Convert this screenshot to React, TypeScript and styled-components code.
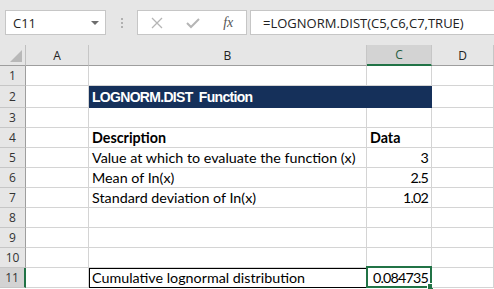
import React from 'react';
import styled, { createGlobalStyle } from 'styled-components';

const GlobalStyle = createGlobalStyle`
  html, body {
    margin: 0;
    padding: 0;
    background: #ffffff;
  }
`;

const Page = styled.div`
  width: 494px;
  height: 289px;
  overflow: hidden;
  background: #ffffff;
  font-family: 'Open Sans', 'Liberation Sans', sans-serif;
`;

const FormulaBar = styled.div`
  display: flex;
  align-items: flex-start;
  height: 45px;
  box-sizing: border-box;
  padding: 10px 0 0 5px;
  background: #e6e6e6;
`;

const NameBox = styled.div`
  display: flex;
  align-items: center;
  justify-content: space-between;
  width: 101px;
  height: 25px;
  box-sizing: border-box;
  padding: 0 6px 0 7px;
  background: #ffffff;
  border: 1px solid #c6c6c6;
  font-size: 13px;
  color: #222222;
`;

const DropArrow = styled.span`
  width: 0;
  height: 0;
  border-left: 4px solid transparent;
  border-right: 4px solid transparent;
  border-top: 4px solid #6d6d6d;
`;

const Grip = styled.div`
  display: flex;
  align-items: center;
  justify-content: center;
  width: 31px;
  height: 25px;
`;

const GripDots = styled.span`
  display: flex;
  flex-direction: column;
  gap: 2px;

  & > i {
    display: block;
    width: 2px;
    height: 2px;
    background: #b0b0b0;
  }
`;

const FormulaButtons = styled.div`
  display: flex;
  align-items: center;
  width: 110px;
  height: 25px;
  box-sizing: border-box;
  padding-left: 1px;
  background: #ffffff;
  border: 1px solid #c6c6c6;
`;

const ButtonSlot = styled.span`
  display: flex;
  align-items: center;
  justify-content: center;
  width: 36px;
  height: 100%;
`;

const Fx = styled.span`
  font-family: 'Liberation Serif', 'DejaVu Serif', serif;
  font-style: italic;
  font-size: 14px;
  color: #555555;
`;

const FormulaInput = styled.div`
  display: flex;
  align-items: center;
  flex: 1;
  height: 25px;
  margin-left: 3px;
  margin-right: -10px;
  box-sizing: border-box;
  padding-left: 12px;
  background: #ffffff;
  border: 1px solid #c6c6c6;
  font-size: 13px;
  color: #222222;
`;

const Sheet = styled.div`
  display: grid;
  grid-template-columns: 26px 63px 278px 65px 1fr;
  grid-template-rows: 21px 20px 22px repeat(9, 20px);
  font-family: 'Lato', 'Liberation Sans', sans-serif;
  font-size: 14.3px;
  color: #000000;
`;

const Corner = styled.div`
  position: relative;
  background: #e6e6e6;
  border-right: 1px solid #bfbfbf;
  border-bottom: 1px solid #9e9e9e;
  box-sizing: border-box;
`;

const ColHead = styled.div<{ $active?: boolean }>`
  display: flex;
  align-items: center;
  justify-content: center;
  box-sizing: border-box;
  background: ${({ $active }) => ($active ? '#d3d3d3' : '#e6e6e6')};
  border-right: 1px solid #c6c6c6;
  border-bottom: ${({ $active }) => ($active ? '2px solid #217346' : '1px solid #9e9e9e')};
  font-family: 'Open Sans', 'Liberation Sans', sans-serif;
  font-size: 12px;
  color: ${({ $active }) => ($active ? '#1f5c3d' : '#222222')};
`;

const RowHead = styled.div<{ $active?: boolean }>`
  display: flex;
  align-items: center;
  justify-content: center;
  box-sizing: border-box;
  background: ${({ $active }) => ($active ? '#d3d3d3' : '#e6e6e6')};
  border-right: ${({ $active }) => ($active ? '2px solid #217346' : '1px solid #9e9e9e')};
  border-bottom: 1px solid #c6c6c6;
  font-family: 'Open Sans', 'Liberation Sans', sans-serif;
  font-size: 12px;
  color: #333333;
`;

const Cell = styled.div<{
  $align?: 'left' | 'right';
  $bold?: boolean;
  $banner?: boolean;
  $boxed?: boolean;
}>`
  position: relative;
  display: flex;
  align-items: center;
  justify-content: ${({ $align }) => ($align === 'right' ? 'flex-end' : 'flex-start')};
  box-sizing: border-box;
  padding: 0 3px;
  white-space: pre;
  border-right: 1px solid ${({ $banner }) => ($banner ? '#15305a' : '#d4d4d4')};
  border-bottom: 1px solid ${({ $banner }) => ($banner ? '#15305a' : '#d4d4d4')};
  background: ${({ $banner }) => ($banner ? '#15305a' : '#ffffff')};
  color: ${({ $banner }) => ($banner ? '#ffffff' : '#000000')};
  font-weight: ${({ $bold }) => ($bold ? 700 : 400)};
  ${({ $align }) => $align === 'right' && `letter-spacing: -0.8px;`}
  ${({ $banner }) =>
    $banner &&
    `font-family: 'Liberation Sans', Arial, sans-serif; font-size: 14px; letter-spacing: -0.7px; padding-top: 1px;`}
  ${({ $boxed }) => $boxed && `outline: 1px solid #000000; outline-offset: -1px;`}
`;

const Selection = styled.div`
  position: absolute;
  left: -1px;
  top: -2px;
  right: -1px;
  bottom: -1px;
  border: 2px solid #217346;
  pointer-events: none;
`;

const FillHandle = styled.div`
  position: absolute;
  right: -4px;
  bottom: -4px;
  width: 5px;
  height: 5px;
  background: #217346;
  border: 1px solid #ffffff;
`;

type RowData = {
  b?: string;
  c?: string;
  bold?: boolean;
  banner?: boolean;
};

const rows: RowData[] = [
  {},
  { b: 'LOGNORM.DIST  Function', banner: true },
  {},
  { b: 'Description', c: 'Data', bold: true },
  { b: 'Value at which to evaluate the function (x)', c: '3' },
  { b: 'Mean of In(x)', c: '2.5' },
  { b: 'Standard deviation of In(x)', c: '1.02' },
  {},
  {},
  {},
  { b: 'Cumulative lognormal distribution', c: '0.084735' },
];

const CrossIcon = () => (
  <svg width="12" height="12" viewBox="0 0 12 12">
    <path d="M1 1 L11 11 M11 1 L1 11" stroke="#b5b5b5" strokeWidth="1.3" fill="none" />
  </svg>
);

const CheckIcon = () => (
  <svg width="14" height="12" viewBox="0 0 14 12">
    <path d="M1 6 L5 10 L13 2" stroke="#b5b5b5" strokeWidth="2" fill="none" />
  </svg>
);

const CornerTriangle = () => (
  <svg width="26" height="20" viewBox="0 0 26 20" style={{ position: 'absolute', left: 0, top: 0 }}>
    <polygon points="22,5 22,17 10,17" fill="#b8b8b8" />
  </svg>
);

export default function App() {
  return (
    <Page>
      <GlobalStyle />
      <FormulaBar>
        <NameBox>
          <span>C11</span>
          <DropArrow />
        </NameBox>
        <Grip>
          <GripDots>
            <i />
            <i />
            <i />
          </GripDots>
        </Grip>
        <FormulaButtons>
          <ButtonSlot>
            <CrossIcon />
          </ButtonSlot>
          <ButtonSlot>
            <CheckIcon />
          </ButtonSlot>
          <ButtonSlot>
            <Fx>fx</Fx>
          </ButtonSlot>
        </FormulaButtons>
        <FormulaInput>=LOGNORM.DIST(C5,C6,C7,TRUE)</FormulaInput>
      </FormulaBar>
      <Sheet>
        <Corner>
          <CornerTriangle />
        </Corner>
        <ColHead>A</ColHead>
        <ColHead>B</ColHead>
        <ColHead $active>C</ColHead>
        <ColHead>D</ColHead>
        {rows.map((r, i) => {
          const n = i + 1;
          const last = n === 11;
          return (
            <React.Fragment key={n}>
              <RowHead $active={last}>{n}</RowHead>
              <Cell />
              <Cell $bold={r.bold || r.banner} $banner={r.banner} $boxed={last}>
                {r.b}
              </Cell>
              <Cell $align={r.bold ? 'left' : 'right'} $bold={r.bold} $banner={r.banner}>
                {r.c}
                {last && (
                  <Selection>
                    <FillHandle />
                  </Selection>
                )}
              </Cell>
              <Cell />
            </React.Fragment>
          );
        })}
      </Sheet>
    </Page>
  );
}
